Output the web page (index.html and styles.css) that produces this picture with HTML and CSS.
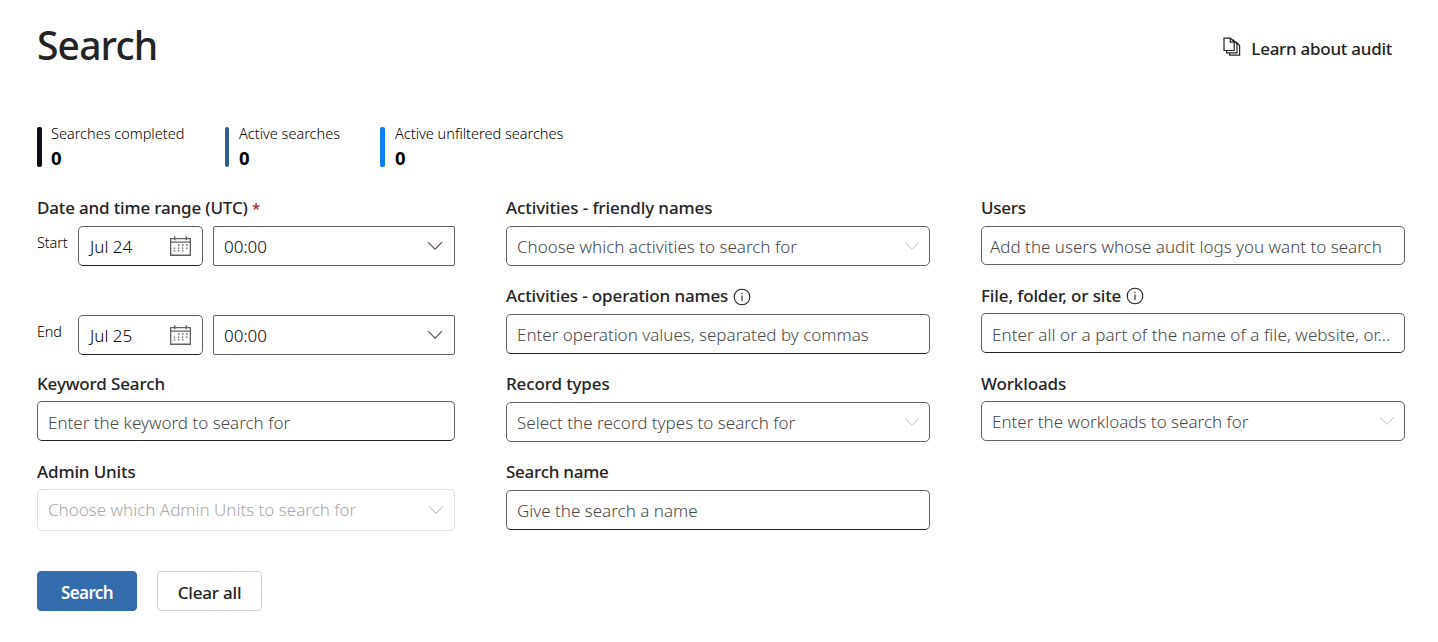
FILE: index.html
```
<!DOCTYPE html>
<html lang="en">
<head>
<meta charset="utf-8">
<title>Search</title>
<link rel="stylesheet" href="styles.css">
</head>
<body>
<svg width="0" height="0" class="defs" aria-hidden="true">
  <symbol id="chevron" viewBox="0 0 16 10"><path d="M1 1.2 L8 8.2 L15 1.2" fill="none" stroke="currentColor" stroke-width="1.1"/></symbol>
  <symbol id="info" viewBox="0 0 18 18"><circle cx="9" cy="9" r="7.8" fill="none" stroke="currentColor" stroke-width="1.1"/><path d="M9 7.5V13M9 4.8V6.2" fill="none" stroke="currentColor" stroke-width="1.1"/></symbol>
  <symbol id="calendar" viewBox="0 0 20 19">
    <path d="M.6 2.5H19.4V18.3H.6ZM.6 5.8H19.4M4.5 .3V4M15.5 .3V4" fill="none" stroke="currentColor" stroke-width="1.3"/>
    <path d="M7.5 8.5H17M3.5 11.5H17M3.5 14.2H13" fill="none" stroke="currentColor" stroke-width="1.3" stroke-dasharray="1.5 2.4"/>
  </symbol>
</svg>
<main class="page">
  <header class="header">
    <h1 class="title">Search</h1>
    <a class="learn">
      <svg class="learn-icon" width="18" height="20" viewBox="0 0 18 20" fill="none" stroke="#242424" stroke-width="1.2"><path d="M1 1.2H7.5L11.2 5V13.5H1Z"/><path d="M7.3 1.2V5.2H11.2M9 3.2H10.5L14 7V15.8H3.6V13.5M12 5.2H13.2L16.6 8.5V18.2H6.6V15.8"/></svg>
      <span>Learn about audit</span>
    </a>
  </header>

  <section class="stats">
    <div class="stat stat-completed"><span class="stat-name">Searches completed</span><b class="stat-value">0</b></div>
    <div class="stat stat-active"><span class="stat-name">Active searches</span><b class="stat-value">0</b></div>
    <div class="stat stat-unfiltered"><span class="stat-name">Active unfiltered searches</span><b class="stat-value">0</b></div>
  </section>

  <form class="form">
    <div class="column column-left">
      <div class="label label-date">Date and time range (UTC) <span class="required">*</span></div>
      <div class="range">
        <span class="range-name">Start</span>
        <div class="box text-box date"><span>Jul 24</span><svg class="calendar" width="21" height="20"><use href="#calendar"/></svg></div>
        <div class="box time"><span>00:00</span><svg class="chevron chevron-warm" width="16" height="10"><use href="#chevron"/></svg></div>
      </div>
      <div class="range range-end">
        <span class="range-name">End</span>
        <div class="box text-box date"><span>Jul 25</span><svg class="calendar" width="21" height="20"><use href="#calendar"/></svg></div>
        <div class="box time"><span>00:00</span><svg class="chevron chevron-cool" width="16" height="10"><use href="#chevron"/></svg></div>
      </div>
      <div class="label label-keyword">Keyword Search</div>
      <div class="box text-box hint lowered">Enter the keyword to search for</div>
      <div class="label label-lowered">Admin Units</div>
      <div class="box disabled"><span>Choose which Admin Units to search for</span><svg class="chevron" width="16" height="10"><use href="#chevron"/></svg></div>
      <div class="actions">
        <button type="button" class="button primary">Search</button>
        <button type="button" class="button">Clear all</button>
      </div>
    </div>

    <div class="column column-middle">
      <div class="label label-wide">Activities - friendly names</div>
      <div class="box hint"><span>Choose which activities to search for</span><svg class="chevron pale" width="16" height="10"><use href="#chevron"/></svg></div>
      <div class="label">Activities - operation names <svg class="info" width="18" height="18"><use href="#info"/></svg></div>
      <div class="box text-box hint">Enter operation values, separated by commas</div>
      <div class="label">Record types</div>
      <div class="box hint"><span>Select the record types to search for</span><svg class="chevron pale" width="16" height="10"><use href="#chevron"/></svg></div>
      <div class="label label-tight">Search name</div>
      <div class="box text-box hint">Give the search a name</div>
    </div>

    <div class="column column-right">
      <div class="label label-tight">Users</div>
      <div class="box hint users">Add the users whose audit logs you want to search</div>
      <div class="label label-lowered">File, folder, or site <svg class="info info-file" width="18" height="18"><use href="#info"/></svg></div>
      <div class="box text-box hint lowered file">Enter all or a part of the name of a file, website, or...</div>
      <div class="label label-lowered">Workloads</div>
      <div class="box hint"><span>Enter the workloads to search for</span><svg class="chevron pale" width="16" height="10"><use href="#chevron"/></svg></div>
    </div>
  </form>
</main>
</body>
</html>
```
FILE: styles.css
```
* { box-sizing: border-box; }
body { margin: 0; background: #fff; color: #242424; font-family: "Noto Sans", sans-serif; font-size: 17px; }
.defs { display: block; }
.page { padding: 21px 33px 0 37px; }
.header { display: flex; justify-content: space-between; height: 106px; padding-right: 13px; }
.title { margin: 0; font-size: 39px; line-height: 48px; font-weight: 500; letter-spacing: -0.85px; }
.learn { display: flex; gap: 10px; height: 24px; margin-top: 16px; line-height: 24px; font-weight: 500; letter-spacing: -0.26px; }
.learn-icon { display: block; }

.stats { display: flex; height: 40px; }
.stat { display: flex; flex-direction: column; position: relative; padding-left: 14px; }
.stat::before { content: ""; position: absolute; left: 0; top: 0; width: 5px; height: 40px; border-radius: 2px; background: #0d0f12; }
.stat-completed { width: 188px; }
.stat-active { width: 155px; }
.stat-active::before { width: 4px; background: #2f6190; }
.stat-unfiltered { padding-left: 15px; }
.stat-unfiltered::before { background: #0f7ff5; }
.stat-name { font-size: 14.5px; line-height: 12px; font-weight: 300; color: #000; white-space: nowrap; }
.stat-value { margin-top: 8px; font-size: 18.5px; line-height: 22px; color: #000; }

.form { display: flex; padding-top: 31px; }
.column { display: flex; flex-direction: column; }
.column-left { width: 418px; margin-right: 51px; }
.column-middle { width: 424px; margin-right: 51px; }
.column-right { width: 424px; }
.label { height: 48px; padding-top: 20px; line-height: 20px; font-weight: 500; letter-spacing: -0.13px; display: flex; white-space: pre; }
.label:first-child { height: 28px; padding-top: 0; }
.label-lowered { padding-top: 21px; }
.label-date { letter-spacing: -0.16px; }
.label-wide { letter-spacing: -0.09px; }
.label-tight { letter-spacing: -0.26px; }
.required { color: #a4262c; font-size: 15px; }
.info { margin-top: 2px; }
.info-file { margin-top: 1px; }

.box { display: flex; align-items: center; justify-content: space-between; height: 40px; padding: 0 9px 0 10px; border: 1px solid #616161; border-radius: 5px; font-weight: 300; white-space: nowrap; color: #000; }
.text-box { border-bottom-color: #242424; }
.hint { color: #484848; }
.lowered { padding-top: 2px; }
.file { letter-spacing: 0.08px; }
.chevron-warm { color: #5c4a42; }
.chevron-cool { color: #42505c; }
.pale { color: #d1d1d1; }
.disabled { height: 42px; padding-right: 10px; padding-bottom: 2px; border-color: #e0e0e0; color: #a8a8a8; }
.disabled .chevron { color: #c8c8c8; margin-top: 2px; }
.users { height: 39px; padding-left: 8px; padding-top: 2px; }

.range { display: flex; }
.range-end { margin-top: 49px; }
.range-name { width: 41px; padding-top: 6px; font-size: 14.5px; line-height: 20px; font-weight: 300; letter-spacing: -0.15px; color: #000; }
.date { width: 125px; margin-right: 10px; padding-left: 11px; padding-right: 11px; }
.time { width: 242px; padding-right: 11px; border-radius: 2px; }
.calendar { color: #616161; }
.label-keyword { height: 46px; padding-top: 19px; }

.actions { display: flex; gap: 20px; margin-top: 40px; }
.button { height: 40px; width: 105px; padding: 3px 0 0; border: 1px solid #d1d1d1; border-radius: 4px; background: #fff; color: #242424; font: 500 17px/24px "Noto Sans", sans-serif; letter-spacing: -0.2px; }
.primary { width: 100px; border-color: #326cad; background: #326cad; color: #fff; font-weight: 600; letter-spacing: -0.6px; }
```
